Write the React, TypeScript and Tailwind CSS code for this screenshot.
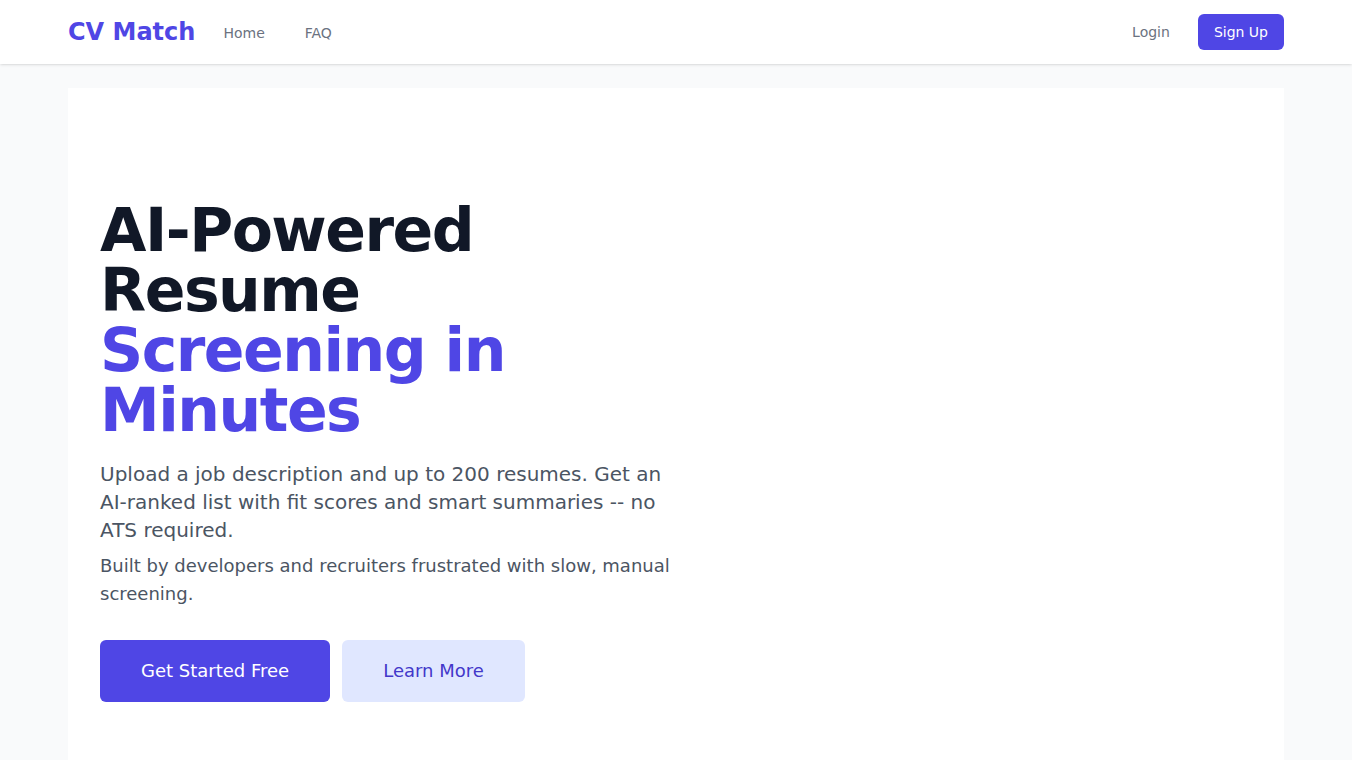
import React from "react";

export default function App() {
  return (
    <div className="min-h-screen bg-[#f9fafb]" style={{ fontFamily: '"DejaVu Sans", sans-serif' }}>
      <header className="bg-white shadow-sm">
        <div className="max-w-7xl mx-auto px-8 h-16 flex items-center justify-between">
          <div className="flex items-center">
            <span className="text-2xl font-bold text-[#4f46e5]">CV Match</span>
            <nav className="ml-[28px] flex items-center gap-10 pt-[2px]">
              <a className="text-sm text-[#6b7280]">Home</a>
              <a className="text-sm text-[#6b7280]">FAQ</a>
            </nav>
          </div>
          <div className="flex items-center gap-7">
            <a className="text-sm text-[#6b7280]">Login</a>
            <a className="h-9 px-4 flex items-center rounded-md bg-[#4f46e5] text-sm text-white">Sign Up</a>
          </div>
        </div>
      </header>
      <main className="max-w-7xl mx-auto px-8 pt-6">
        <div className="bg-white px-8 pt-[112px] pb-16">
          <div className="w-1/2">
            <h1 className="text-6xl font-extrabold tracking-tight text-[#111827] leading-[60px]">
              <span className="block">AI-Powered Resume</span>
              <span className="block text-[#4f46e5]">Screening in Minutes</span>
            </h1>
            <p className="mt-5 text-xl leading-7 text-[#4b5563]">
              Upload a job description and up to 200 resumes. Get an AI-ranked list with fit scores and smart summaries -- no ATS required.
            </p>
            <p className="mt-2 text-lg leading-7 text-[#4b5563]">
              Built by developers and recruiters frustrated with slow, manual screening.
            </p>
            <div className="mt-8 flex gap-3">
              <a className="h-[62px] px-[41px] flex items-center rounded-md bg-[#4f46e5] text-lg text-white">Get Started Free</a>
              <a className="h-[62px] px-[41px] flex items-center rounded-md bg-[#e0e7ff] text-lg text-[#4338ca]">Learn More</a>
            </div>
          </div>
        </div>
      </main>
    </div>
  );
}
